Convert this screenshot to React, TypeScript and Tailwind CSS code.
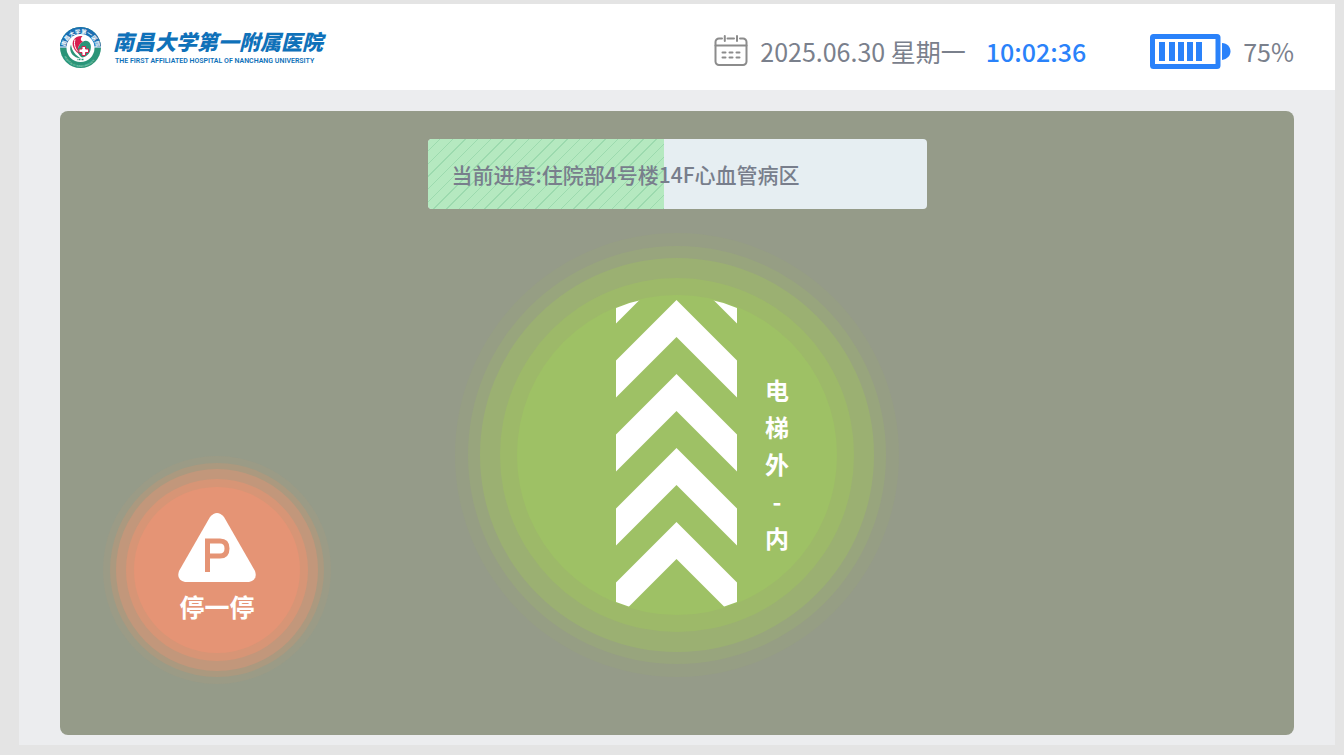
import React from "react";

const TASK = {
  date: "2025.06.30",
  weekday: "星期一",
  time: "10:02:36",
  battery: 75,
  progress: 47.4,
  location: "住院部4号楼14F心血管病区",
  route: ["电", "梯", "外", "-", "内"],
};

function Emblem() {
  return (
    <svg viewBox="0 0 82 82" className="h-[41px] w-[41px] shrink-0" aria-hidden="true">
      <defs>
        <path id="emblem-top" d="M10 44 A31 31 0 0 1 72 44" />
        <path id="emblem-bottom" d="M5 44 A36 36 0 0 0 77 44" />
      </defs>
      <circle cx="41" cy="41" r="41" fill="#2a9478" />
      <path d="M0 41 A41 41 0 0 1 82 41 Z" fill="#1b6fb3" />
      <path d="M0 40 H82" stroke="#fff" strokeWidth="2" />
      <text fontSize="11" fontWeight="700" fill="#fff" fontFamily="Noto Sans CJK SC, sans-serif">
        <textPath href="#emblem-top" startOffset="5">南昌大学第一医院</textPath>
      </text>
      <text fontSize="5" fill="#b9e0d2" fontFamily="Roboto, sans-serif">
        <textPath href="#emblem-bottom" startOffset="16">HOSPITAL OF NANCHANG UNIV</textPath>
      </text>
      <circle cx="41" cy="42" r="28" fill="#fff" />
      <path d="M45 18 C28 17 22 30 27 41 C30 49 36 52 40 56 C37 48 35 42 38 37 C40 33 44 31 46 29 C41 28 40 23 45 18 Z" fill="#d81e4f" />
      <path d="M45 30 C55 23 65 33 61 46 C59 54 52 60 44 61 C36 56 34 47 37 40 C39 35 42 32 45 30 Z" fill="#2a9478" />
      <path d="M22 35 C16 50 27 62 42 63 C31 56 24 49 22 35 Z" fill="#2a9478" />
      <path d="M30 25 C27 36 31 44 36 49" fill="none" stroke="#fff" strokeWidth="2" />
      <path
        d="M44 39 H51 V44 H57 V51 H51 V57 H44 V51 H38 V44 H44 Z"
        fill="#fff"
        stroke="#d81e4f"
        strokeWidth="2"
      />
      <path d="M35 65 H48" stroke="#2a9478" strokeWidth="3" strokeDasharray="2 1" />
    </svg>
  );
}

function CalendarIcon() {
  return (
    <svg
      viewBox="0 0 34 32"
      className="h-8 w-[34px] shrink-0"
      fill="none"
      stroke="#8c8c8c"
      strokeWidth="2"
      strokeLinecap="round"
      aria-hidden="true"
    >
      <path d="M8 3.5 H5 A3.5 3.5 0 0 0 1.5 7 V26.5 A3.5 3.5 0 0 0 5 30 H29 A3.5 3.5 0 0 0 32.5 26.5 V7 A3.5 3.5 0 0 0 29 3.5 H26 M13.5 3.5 H20" />
      <path d="M1.5 10.5 H32.5 M10.8 1 V6 M23 1 V6" />
      <path d="M8.5 17.5 H11.5 M15.5 17.5 H18.5 M22.5 17.5 H25.5 M8.5 22.5 H11.5 M15.5 22.5 H18.5 M22.5 22.5 H25.5" />
    </svg>
  );
}

function BatteryIcon() {
  return (
    <svg viewBox="0 0 81 35" className="h-[35px] w-[81px] shrink-0" fill="#2a82fa" aria-hidden="true">
      <rect x="2.5" y="2.5" width="65.5" height="30" rx="1" fill="none" stroke="#2a82fa" strokeWidth="5" />
      <path d="M9 8 h6 v19 h-6z M19 8 h6 v19 h-6z M28 8 h6 v19 h-6z M37 8 h6 v19 h-6z M46 8 h6 v19 h-6z" />
      <path d="M72 9 C77 9 80.500 13 80.500 17.500 C80.500 22 77 25 72 26 Z" />
    </svg>
  );
}

function ForwardArrows() {
  return (
    <svg viewBox="0 0 121 316" className="h-[316px] w-[121px]" fill="#fff" aria-hidden="true">
      <defs>
        <clipPath id="disc">
          <circle cx="60.5" cy="158" r="159" />
        </clipPath>
      </defs>
      <g clipPath="url(#disc)">
        {[-71, 3, 77, 151, 225].map((y) => (
          <path key={y} d={`M60.5 ${y} L121 ${y + 60.5} V${y + 97.5} L60.5 ${y + 37} L0 ${y + 97.5} V${y + 60.5} Z`} />
        ))}
      </g>
    </svg>
  );
}

function ParkingSign() {
  return (
    <svg viewBox="0 0 78 69" className="h-[69px] w-[78px]" aria-hidden="true">
      <path d="M32 4 Q39 -4 46 4 L77 58 Q80 67 71 69 H7 Q-2 67 1 58 Z" fill="#fff" />
      <path d="M29.5 59 V28 H42 Q49 28 49 35.5 Q49 43 42 43 H29.5" fill="none" stroke="#e59475" strokeWidth="5" />
    </svg>
  );
}

export default function App() {
  return (
    <div className="flex min-h-screen flex-col bg-[#e4e4e4] pt-1 pr-[9px] pb-2.5 pl-[19px] font-['Noto_Sans_CJK_SC',sans-serif]">
      <header className="flex h-[86px] items-center justify-between bg-white px-[41px]">
        <div className="flex items-center gap-3">
          <Emblem />
          <div className="flex flex-col gap-1 text-[#0f71b9]">
            <h1 className="text-[21px] leading-6 font-black whitespace-nowrap italic">南昌大学第一附属医院</h1>
            <p className="pl-0.5 font-[Roboto,sans-serif] text-[7px] leading-2 font-semibold whitespace-nowrap">
              THE FIRST AFFILIATED HOSPITAL OF NANCHANG UNIVERSITY
            </p>
          </div>
        </div>

        <div className="flex items-center pt-2 text-[25px] leading-9 whitespace-nowrap text-[#7a808c]">
          <div className="flex items-center gap-3">
            <CalendarIcon />
            <span>
              {TASK.date} {TASK.weekday}
            </span>
          </div>
          <time className="ml-5 font-medium text-[#2a82fa]">{TASK.time}</time>
          <div className="ml-16 flex items-center gap-3">
            <BatteryIcon />
            <span>{TASK.battery}%</span>
          </div>
        </div>
      </header>

      <main className="flex flex-1 flex-col bg-[#ecedef] px-[41px] pt-[21px] pb-2.5">
        <section className="flex flex-1 flex-col items-center gap-6 rounded-lg bg-[#959b89] pt-7 pb-[51px]">
          <div
            role="progressbar"
            aria-valuenow={TASK.progress}
            aria-label="当前进度"
            className="relative flex h-[70px] w-[499px] items-center overflow-hidden rounded bg-[#e6eef2] px-6"
          >
            <div
              className="absolute inset-y-0 left-0 bg-[#b5e9c0] bg-[repeating-linear-gradient(135deg,transparent_0px,transparent_8px,#9cdaae_8px,#9cdaae_9px)]"
              style={{ width: `${TASK.progress}%` }}
            />
            <p className="relative text-[21px] leading-8 font-medium whitespace-nowrap text-[#787e8c]">
              当前进度:{TASK.location}
            </p>
          </div>

          <div className="grid w-full flex-1 grid-cols-[1fr_auto_1fr]">
            <button
              type="button"
              className="ml-[43px] self-end justify-self-start rounded-full bg-[#9b9b86] p-[7px]"
            >
              <span className="block rounded-full bg-[#ab997f] p-1.5">
                <span className="block rounded-full bg-[#c2977b] p-2.5">
                  <span className="block rounded-full bg-[#d79576] p-2">
                    <span className="flex size-[166px] flex-col items-center justify-center gap-1.5 rounded-full bg-[#e59475] pb-1 text-white">
                      <ParkingSign />
                      <span className="text-[25px] leading-9 font-bold">停一停</span>
                    </span>
                  </span>
                </span>
              </span>
            </button>

            <div className="self-start rounded-full bg-[#969e84] p-[13px]">
              <div className="rounded-full bg-[#98a57d] p-3">
                <div className="rounded-full bg-[#9bb072] p-5">
                  <div className="rounded-full bg-[#9db969] p-[17px]">
                    <div className="grid size-80 grid-cols-[99px_121px_1fr] items-center rounded-full bg-[#9ec165]">
                      <div className="col-start-2">
                        <ForwardArrows />
                      </div>
                      <p className="flex flex-col items-center justify-self-start pt-4 pl-7 text-[24px] leading-[37px] font-bold text-white">
                        {TASK.route.map((char) => (
                          <span key={char}>{char}</span>
                        ))}
                      </p>
                    </div>
                  </div>
                </div>
              </div>
            </div>
          </div>
        </section>
      </main>
    </div>
  );
}
